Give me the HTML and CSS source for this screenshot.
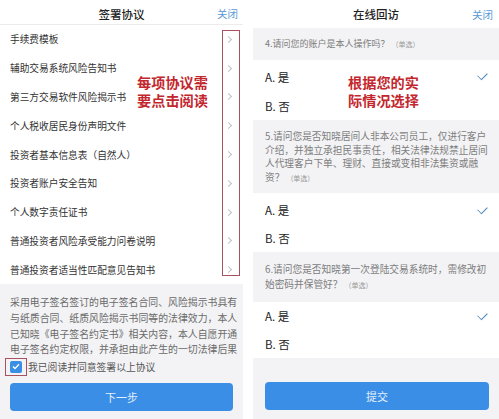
FILE: index.html
```html
<!DOCTYPE html>
<html lang="zh-CN">

<head>
    <meta charset="UTF-8">
    <meta name="viewport" content="width=device-width, initial-scale=1.0">
    <title>签署协议 / 在线回访</title>
    <link rel="stylesheet" href="styles.css">
</head>

<body>
    <div class="screens">
        <!-- 左边：签署协议 -->
        <section class="phone sign">
            <div class="header line">
                <span class="title">签署协议</span>
                <a href="javascript:;" class="close">关闭</a>
            </div>
            <ul class="list">
                <li><span>手续费模板</span><i class="arrow"></i></li>
                <li><span>辅助交易系统风险告知书</span><i class="arrow"></i></li>
                <li><span>第三方交易软件风险揭示书</span><i class="arrow"></i></li>
                <li><span>个人税收居民身份声明文件</span><i class="arrow"></i></li>
                <li><span>投资者基本信息表（自然人）</span><i class="arrow"></i></li>
                <li><span>投资者账户安全告知</span><i class="arrow"></i></li>
                <li><span>个人数字责任证书</span><i class="arrow"></i></li>
                <li><span>普通投资者风险承受能力问卷说明</span><i class="arrow"></i></li>
                <li><span>普通投资者适当性匹配意见告知书</span><i class="arrow"></i></li>
            </ul>
            <div class="foot">
                <p class="desc">采用电子签名签订的电子签名合同、风险揭示书具有<br>与纸质合同、纸质风险揭示书同等的法律效力，本人<br>已知晓《电子签名约定书》相关内容，本人自愿开通<br>电子签名约定权限，并承担由此产生的一切法律后果</p>
                <label class="agree">
                    <span class="mark"><span class="box"><svg width="8" height="7" viewBox="0 0 8 7"><polyline points="1,3.6 3,5.6 7,1.2" fill="none" stroke="#fff" stroke-width="1.4"/></svg></span></span>
                    我已阅读并同意签署以上协议
                </label>
                <a href="javascript:;" class="btn">下一步</a>
            </div>

            <!-- 标注 -->
            <div class="frame"></div>
            <div class="note note_left">每项协议需<br>要点击阅读</div>
        </section>

        <!-- 右边：在线回访 -->
        <section class="phone visit">
            <div class="header">
                <span class="title">在线回访</span>
                <a href="javascript:;" class="close">关闭</a>
            </div>

            <div class="q q4">4.请问您的账户是本人操作吗？<small>（单选）</small></div>
            <ul class="opts">
                <li><span>A. 是</span><i class="tick"></i></li>
                <li><span>B. 否</span></li>
            </ul>

            <div class="q q5">5.请问您是否知晓居间人非本公司员工，仅进行客户<br>介绍，并独立承担民事责任，相关法律法规禁止居间<br>人代理客户下单、理财、直接或变相非法集资或融<br>资？<small>（单选）</small></div>
            <ul class="opts">
                <li><span>A. 是</span><i class="tick"></i></li>
                <li><span>B. 否</span></li>
            </ul>

            <div class="q q6">6.请问您是否知晓第一次登陆交易系统时，需修改初<br>始密码并保管好？<small>（单选）</small></div>
            <ul class="opts">
                <li><span>A. 是</span><i class="tick"></i></li>
                <li><span>B. 否</span></li>
            </ul>

            <div class="foot">
                <a href="javascript:;" class="btn">提交</a>
            </div>

            <div class="note note_right">根据您的实<br>际情况选择</div>
        </section>
    </div>
</body>

</html>
```

FILE: styles.css
```css
* {
    margin: 0;
    padding: 0;
    box-sizing: border-box;
}

a {
    text-decoration: none;
}

ul {
    list-style: none;
}

body {
    background-color: #fff;
    font-family: "Noto Sans CJK SC", "Noto Sans", sans-serif;
    color: #333;
}

.screens {
    display: flex;
    gap: 10px;
    width: 499px;
    height: 419px;
    overflow: hidden;
}

.phone {
    position: relative;
    display: flex;
    flex-direction: column;
    background-color: #fff;
}

.sign {
    width: 243px;
}

.visit {
    width: 246px;
    background-color: #f3f3f5;
}

/* 顶部标题栏 */
.header {
    position: relative;
    display: flex;
    align-items: center;
    justify-content: center;
    height: 28px;
    background-color: #fff;
}

.header.line {
    height: 25px;
    border-bottom: 1px solid #ececec;
    padding-top: 3px;
}

.header .title {
    font-size: 11.5px;
    font-weight: 500;
    color: #222;
}

.header .close {
    position: absolute;
    right: 5px;
    top: 50%;
    transform: translate(0, -50%);
    font-size: 10.5px;
    color: #5a9ad6;
}

.sign .header .close {
    margin-top: 1px;
}

.visit .header .close {
    right: 6px;
}

/* 协议列表 */
.list li {
    display: flex;
    align-items: center;
    justify-content: space-between;
    height: 28.8px;
    padding: 0 10px 0 10px;
    font-size: 9.7px;
    color: #333;
}

.list .arrow {
    width: 5px;
    height: 5px;
    margin-right: 2px;
    border-top: 1px solid #c2c2c2;
    border-right: 1px solid #c2c2c2;
    transform: rotate(45deg);
}

.sign .foot {
    flex: 1;
    display: flex;
    flex-direction: column;
    background-color: #f3f3f5;
    padding: 11px 10px 0 10px;
}

.desc {
    font-size: 9.9px;
    line-height: 15.7px;
    color: #6a6a6a;
    white-space: nowrap;
}

.agree {
    display: flex;
    align-items: center;
    gap: 1px;
    height: 18px;
    margin: 0 0 0 -5px;
    font-size: 9.8px;
    color: #555;
}

.agree .mark {
    display: flex;
    align-items: center;
    justify-content: center;
    width: 22px;
    height: 18px;
    border: 1.5px solid #a9525f;
}

.agree .box {
    display: flex;
    align-items: center;
    justify-content: center;
    width: 12px;
    height: 12px;
    border-radius: 2px;
    background-color: #3a8ee6;
}

.btn {
    display: block;
    height: 28px;
    border-radius: 4px;
    background-color: #3a8ee6;
    color: #e4f0fd;
    font-size: 11px;
    line-height: 28px;
    text-align: center;
}

.sign .btn {
    margin-top: 7px;
}

/* 红框 */
.frame {
    position: absolute;
    left: 222px;
    top: 30px;
    width: 18px;
    height: 246px;
    border: 1.5px solid #a9525f;
}

/* 标注文字 */
.note {
    position: absolute;
    top: 73px;
    font-size: 14.2px;
    font-weight: 700;
    line-height: 18px;
    color: #c3272e;
    white-space: nowrap;
}

.note_left {
    left: 137px;
}

.note_right {
    left: 95px;
}

/* 问卷 */
.q {
    padding: 10px 6px 10px 12px;
    font-size: 9.7px;
    line-height: 13.5px;
    color: #7d7d7d;
    white-space: nowrap;
}

.q small {
    font-size: 7px;
    color: #999;
    margin-left: 2px;
}

.q4 {
    height: 32px;
    font-size: 9px;
    line-height: 12px;
}

.q5 {
    height: 73px;
}

.q6 {
    height: 50px;
    line-height: 15px;
}

.opts {
    background-color: #fff;
}

.opts li {
    display: flex;
    align-items: center;
    justify-content: space-between;
    height: 29px;
    padding: 0 11px 0 12px;
    font-size: 11.5px;
    color: #222;
}

.opts:nth-of-type(1) {
    padding-top: 2px;
}

.opts:nth-of-type(2) li,
.opts:nth-of-type(3) li {
    height: 28px;
}

.opts:nth-of-type(2) {
    padding-top: 3px;
}

.tick {
    width: 11px;
    height: 6px;
    margin-top: -3px;
    border-left: 1.6px solid #4f87bd;
    border-bottom: 1.6px solid #4f87bd;
    transform: rotate(-45deg) scaleX(0.8);
}

.visit .foot {
    flex: 1;
    padding: 24px 10px 0 12px;
}
```
